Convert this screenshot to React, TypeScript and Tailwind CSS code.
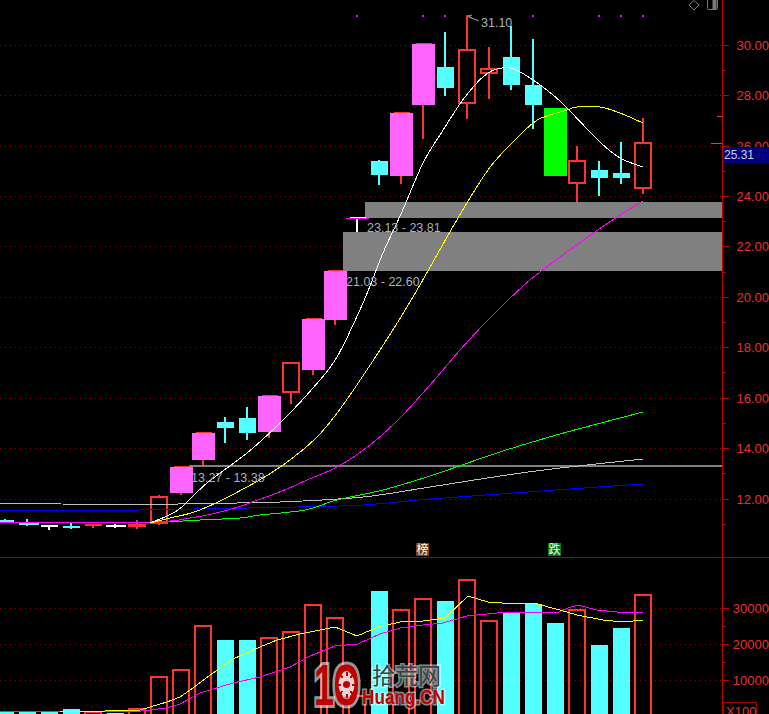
const RED = "#ff3232";
const CYAN = "#54ffff";
const PINK = "#ff64ff";
const GREEN = "#00ff00";

type Candle = { c: number; top: number; bot: number; hi: number; lo: number; kind: "pink" | "red" | "cyan" | "green" };

const candles: Candle[] = [
  { c: 159, top: 497, bot: 523, hi: 495, lo: 525, kind: "red" },
  { c: 181, top: 467, bot: 493, hi: 466, lo: 495, kind: "pink" },
  { c: 203, top: 433, bot: 460, hi: 432, lo: 465, kind: "pink" },
  { c: 225, top: 422, bot: 428, hi: 417, lo: 443, kind: "cyan" },
  { c: 247, top: 418, bot: 433, hi: 407, lo: 440, kind: "cyan" },
  { c: 269, top: 396, bot: 432, hi: 395, lo: 438, kind: "pink" },
  { c: 291, top: 363, bot: 392, hi: 362, lo: 404, kind: "red" },
  { c: 313, top: 319, bot: 370, hi: 318, lo: 375, kind: "pink" },
  { c: 335, top: 271, bot: 320, hi: 270, lo: 325, kind: "pink" },
  { c: 379, top: 161, bot: 175, hi: 160, lo: 185, kind: "cyan" },
  { c: 401, top: 113, bot: 176, hi: 112, lo: 184, kind: "pink" },
  { c: 423, top: 44, bot: 105, hi: 43, lo: 139, kind: "pink" },
  { c: 445, top: 67, bot: 88, hi: 32, lo: 96, kind: "cyan" },
  { c: 467, top: 50, bot: 103, hi: 16, lo: 119, kind: "red" },
  { c: 489, top: 69, bot: 73, hi: 47, lo: 99, kind: "red" },
  { c: 511, top: 57, bot: 85, hi: 26, lo: 90, kind: "cyan" },
  { c: 533, top: 85, bot: 105, hi: 39, lo: 129, kind: "cyan" },
  { c: 555, top: 108, bot: 176, hi: 108, lo: 176, kind: "green" },
  { c: 577, top: 161, bot: 183, hi: 146, lo: 202, kind: "red" },
  { c: 599, top: 170, bot: 178, hi: 161, lo: 196, kind: "cyan" },
  { c: 621, top: 173, bot: 178, hi: 142, lo: 184, kind: "cyan" },
  { c: 643, top: 143, bot: 188, hi: 118, lo: 194, kind: "red" },
];

const tiny = [
  { x: 0, w: 14, y: 520, h: 2, col: CYAN, wx: 4, w0: 519, w1: 522 },
  { x: 19, w: 20, y: 523, h: 2, col: CYAN, wx: 26, w0: 519, w1: 526 },
  { x: 41, w: 17, y: 525, h: 2, col: "#ffffff", wx: 48, w0: 525, w1: 530 },
  { x: 63, w: 17, y: 526, h: 2, col: CYAN, wx: 70, w0: 522, w1: 529 },
  { x: 85, w: 17, y: 524, h: 2, col: RED, wx: 92, w0: 524, w1: 528 },
  { x: 106, w: 20, y: 525, h: 2, col: "#ffffff", wx: 114, w0: 524, w1: 528 },
  { x: 128, w: 18, y: 524, h: 3, col: RED, wx: 136, w0: 520, w1: 529 },
];

const smooth = (a: number[][]) => {
  let d = `M${a[0][0]} ${a[0][1]}`;
  for (let i = 0; i < a.length - 1; i++) {
    const p0 = a[Math.max(i - 1, 0)];
    const p1 = a[i];
    const p2 = a[i + 1];
    const p3 = a[Math.min(i + 2, a.length - 1)];
    const c1x = p1[0] + (p2[0] - p0[0]) / 6;
    const c1y = p1[1] + (p2[1] - p0[1]) / 6;
    const c2x = p2[0] - (p3[0] - p1[0]) / 6;
    const c2y = p2[1] - (p3[1] - p1[1]) / 6;
    d += ` C${c1x.toFixed(1)} ${c1y.toFixed(1)} ${c2x.toFixed(1)} ${c2y.toFixed(1)} ${p2[0]} ${p2[1]}`;
  }
  return d;
};

const pts = (a: number[][]) => a.map((p) => p.join(",")).join(" ");

const lines: { col: string; d: number[][] }[] = [
  { col: "#c0c0c0", d: [[61, 504], [148, 504.5], [200, 503.5], [280, 502], [363, 497], [430, 487], [500, 476], [560, 468], [643, 459]] },
  { col: "#0000ff", d: [[0, 510], [140, 510], [193, 509], [297, 507], [363, 505], [430, 499], [500, 494], [570, 489], [643, 484]] },
  { col: GREEN, d: [[0, 522], [150, 522], [200, 520], [240, 518], [260, 515], [305, 510], [337, 500], [383, 490], [430, 476], [500, 452], [560, 434], [643, 412]] },
  { col: "#ff00ff", d: [[0, 523], [150, 522], [190, 518], [228, 510], [277, 493], [307, 480], [337, 467], [370, 445], [400, 418], [430, 385], [460, 350], [490, 318], [530, 280], [585, 239], [617, 217], [643, 201]] },
  { col: "#ffff00", d: [[150, 523], [170, 518], [200, 510], [247, 487], [283, 465], [317, 437], [343, 405], [380, 350], [413, 297], [458, 218], [488, 170], [510, 145], [533, 123], [544, 117], [567, 110], [577, 107], [600, 107], [620, 113], [643, 123]] },
  { col: "#ffffff", d: [[150, 523], [178, 510], [207, 483], [247, 453], [280, 423], [313, 388], [337, 357], [363, 303], [383, 253], [401, 214], [423, 163], [440, 135], [465, 97], [488, 73], [510, 68], [530, 78], [553, 95], [567, 108], [600, 142], [620, 158], [643, 167]] },
];

const vols: { c: number; top: number; red: boolean }[] = [
  { c: 5, top: 711, red: false }, { c: 27, top: 711, red: false }, { c: 49, top: 711, red: false },
  { c: 71, top: 709, red: false }, { c: 93, top: 712, red: true }, { c: 115, top: 713, red: false },
  { c: 137, top: 709, red: true }, { c: 159, top: 677, red: true }, { c: 181, top: 670, red: true },
  { c: 203, top: 626, red: true }, { c: 225, top: 640, red: false }, { c: 247, top: 640, red: false },
  { c: 269, top: 638, red: true }, { c: 291, top: 632, red: true }, { c: 313, top: 605, red: true },
  { c: 335, top: 618, red: true }, { c: 357, top: 696, red: true }, { c: 379, top: 591, red: false },
  { c: 401, top: 610, red: true }, { c: 423, top: 599, red: true }, { c: 445, top: 601, red: false },
  { c: 467, top: 580, red: true }, { c: 489, top: 621, red: true }, { c: 511, top: 613, red: false },
  { c: 533, top: 604, red: false }, { c: 555, top: 623, red: false }, { c: 577, top: 610, red: true },
  { c: 599, top: 645, red: false }, { c: 621, top: 628, red: false }, { c: 643, top: 595, red: true },
];

const volYellow = [[60, 711], [105, 711], [140, 710], [150, 707], [167, 702], [180, 697], [193, 688], [213, 673], [233, 659], [260, 647], [277, 640], [300, 634], [320, 630], [335, 627], [357, 636], [378, 627], [400, 622], [423, 621], [445, 618], [468, 596], [488, 602], [502, 603], [535, 603], [548, 607], [560, 610], [577, 615], [603, 620], [623, 622], [643, 620]];
const volMagenta = [[0, 711], [133, 712], [167, 708], [180, 704], [200, 693], [233, 683], [260, 677], [290, 667], [310, 656], [335, 646], [358, 644], [380, 634], [400, 628], [423, 625], [443, 623], [467, 616], [487, 614], [507, 612], [543, 612], [557, 613], [568, 608], [578, 605], [597, 610], [617, 612], [643, 612]];

const priceGrid = [45, 95, 146, 196, 246, 297, 347, 398, 448, 499];
const priceLabels = ["30.00", "28.00", "26.00", "24.00", "22.00", "20.00", "18.00", "16.00", "14.00", "12.00"];
const volGrid = [608, 644, 680];
const volLabels = ["30000", "20000", "10000"];
const topDots = [357, 423, 445, 467, 533, 599, 621, 643];

const FONT = "'Liberation Sans', Arial, sans-serif";
const CJK = "'Noto Sans CJK SC', sans-serif";

function Logo() {
  const teeth = [0, 45, 90, 135, 180, 225, 270, 315];
  const halo = { paintOrder: "stroke" as const };
  return (
    <svg className="absolute left-[310px] top-[655px] h-[59px] w-[145px]" viewBox="0 0 145 59">
      <g fontFamily={FONT} fontWeight="700" fontSize="58" fill="#c00000" stroke="rgba(255,255,255,0.6)" strokeWidth="6" style={halo}>
        <text x="4" y="50" textLength="20" lengthAdjust="spacingAndGlyphs">1</text>
        <text x="23" y="50" textLength="27" lengthAdjust="spacingAndGlyphs">0</text>
      </g>
      <ellipse cx="36.5" cy="29.5" rx="8" ry="12.5" fill="#ead4d4" />
      <g stroke="#c00000" strokeWidth="2" shapeRendering="crispEdges">
        {teeth.map((a) => {
          const r = (a * Math.PI) / 180;
          const cx = 36.5;
          const cy = 29.5;
          return (
            <line
              key={a}
              x1={cx + Math.cos(r) * 5.5}
              y1={cy + Math.sin(r) * 9}
              x2={cx + Math.cos(r) * 9}
              y2={cy + Math.sin(r) * 13}
            />
          );
        })}
      </g>
      <circle cx="36.5" cy="29.5" r="3.5" fill="#c00000" />
      <text x="62" y="29" fontSize="23" fontFamily={CJK} fill="#2f4444" stroke="rgba(255,255,255,0.55)" strokeWidth="3" style={halo}>
        拾荒网
      </text>
      <text
        x="52" y="49" fontSize="20" fontWeight="700" fontFamily={FONT} textLength="83" lengthAdjust="spacingAndGlyphs"
        fill="#c00000" stroke="rgba(255,255,255,0.55)" strokeWidth="3" style={halo}
      >
        Huang.CN
      </text>
    </svg>
  );
}

function PricePlot() {
  return (
    <svg className="block h-[557px] w-[722px] shrink-0" viewBox="0 0 722 557">
      <g shapeRendering="crispEdges">
        {priceGrid.map((y) => (
          <line key={y} x1="0" x2="722" y1={y + 0.5} y2={y + 0.5} stroke="#a00000" strokeDasharray="1 4" />
        ))}
        {topDots.map((x) => (
          <rect key={x} x={x - 1} y="15" width="2" height="2" fill="#ff00ff" />
        ))}
        <rect x="365" y="202" width="357" height="16" fill="#808080" />
        <rect x="343" y="232" width="379" height="39" fill="#808080" />
        <rect x="189" y="465" width="533" height="2" fill="#808080" />
        <rect x="711" y="143" width="11" height="1" fill="#808000" />
        <rect x="717" y="116" width="5" height="1" fill={RED} />
      </g>

      <g shapeRendering="crispEdges">
        {tiny.map((t) => (
          <g key={t.x}>
            <rect x={t.wx} y={t.w0} width="2" height={t.w1 - t.w0} fill={t.col} />
            <rect x={t.x} y={t.y} width={t.w} height={t.h} fill={t.col} />
          </g>
        ))}
        <rect x="356" y="217" width="2" height="15" fill="#ffffff" />
        <rect x="346" y="218" width="23" height="1" fill="#ff00ff" />
        <rect x="350" y="217" width="16" height="1" fill="#ffffff" />
        {candles.map((k) => {
          const x = k.c - 8;
          if (k.kind === "red") {
            return (
              <g key={k.c}>
                <rect x={k.c - 1} y={k.hi} width="2" height={k.top - k.hi} fill={RED} />
                <rect x={k.c - 1} y={k.bot} width="2" height={k.lo - k.bot} fill={RED} />
                <rect x={x} y={k.top} width="16" height={k.bot - k.top} fill="none" stroke={RED} strokeWidth="2" />
              </g>
            );
          }
          if (k.kind === "cyan") {
            return (
              <g key={k.c}>
                <rect x={k.c - 1} y={k.hi} width="2" height={k.lo - k.hi} fill={CYAN} />
                <rect x={x} y={k.top} width="17" height={k.bot - k.top} fill={CYAN} />
              </g>
            );
          }
          if (k.kind === "green") {
            return <rect key={k.c} x={k.c - 11} y={k.top} width="23" height={k.bot - k.top} fill={GREEN} />;
          }
          return (
            <g key={k.c}>
              <rect x={k.c - 1} y={k.bot} width="2" height={k.lo - k.bot} fill={RED} />
              <rect x={k.c - 7} y={k.hi} width="16" height="1" fill={RED} />
              <rect x={k.c - 11} y={k.top} width="23" height={k.bot - k.top} fill={PINK} />
            </g>
          );
        })}
      </g>

      <g fill="none" strokeWidth="1" shapeRendering="crispEdges">
        <polyline points={pts([[0, 503], [61, 503]])} stroke="#c0c0c0" />
        {lines.map((l) => (
          <path key={l.col} d={smooth(l.d)} stroke={l.col} />
        ))}
      </g>

      <path d="M479 21 L469 17 M472 15 L468 16 L472 18" fill="none" stroke="#a0a0a0" strokeWidth="1" />
      <g fontFamily={FONT} fontSize="12.5" fill="#aab2ba">
        <text x="481" y="27">31.10</text>
        <text x="367" y="232">23.13 - 23.81</text>
        <text x="346" y="286">21.03 - 22.60</text>
        <text x="191" y="482">13.27 - 13.38</text>
      </g>

      <g fill="none" stroke="#7a7a7a" shapeRendering="geometricPrecision">
        <path d="M694 0.5 L699 5 L694 10 L689 5 Z" />
        <path d="M707.5 -1 V8.5 Q707.5 9.5 708.5 9.5 H716.5 Q717.5 9.5 717.5 8.5 V-1" />
        <rect x="712.5" y="0" width="4" height="9" fill="#7a7a7a" stroke="none" />
      </g>

      <rect x="416" y="543" width="13" height="13" fill="#7a3e0a" shapeRendering="crispEdges" />
      <text x="422.5" y="554" textAnchor="middle" fontSize="12" fontFamily={CJK} fill="#ffffff">榜</text>
      <rect x="548" y="543" width="13" height="13" fill="#007a10" shapeRendering="crispEdges" />
      <text x="554.5" y="554" textAnchor="middle" fontSize="12" fontFamily={CJK} fill="#ffffff">跌</text>
    </svg>
  );
}

function VolumePlot() {
  return (
    <svg className="block h-[156px] w-[722px] shrink-0" viewBox="0 558 722 156">
      <g shapeRendering="crispEdges">
        {volGrid.map((y) => (
          <line key={y} x1="0" x2="722" y1={y + 0.5} y2={y + 0.5} stroke="#a00000" strokeDasharray="1 4" />
        ))}
        {vols.map((v) =>
          v.red ? (
            <rect key={v.c} x={v.c - 8} y={v.top} width="16" height={730 - v.top} fill="none" stroke={RED} strokeWidth="2" />
          ) : (
            <rect key={v.c} x={v.c - 8} y={v.top} width="17" height={714 - v.top} fill={CYAN} />
          ),
        )}
      </g>
      <g fill="none" strokeWidth="1" shapeRendering="crispEdges">
        <polyline points={pts(volMagenta)} stroke="#ff00ff" />
        <polyline points={pts(volYellow)} stroke="#ffff00" />
      </g>
    </svg>
  );
}

function Axis({ ticks, labels, minor, height, offset }: { ticks: number[]; labels: string[]; minor: number[]; height: number; offset: number }) {
  return (
    <svg className="block w-[46px] shrink-0" style={{ height }} viewBox={`723 ${offset} 46 ${height}`}>
      <g shapeRendering="crispEdges">
        {ticks.map((y) => (
          <line key={y} x1="723" x2="729" y1={y + 0.5} y2={y + 0.5} stroke="#c00000" />
        ))}
        {minor.map((y) => (
          <line key={y} x1="723" x2="726" y1={y + 0.5} y2={y + 0.5} stroke="#c00000" />
        ))}
      </g>
      <g fontFamily={FONT} fontSize="13" fill="#e83030" textAnchor="end">
        {labels.map((t, i) => (
          <text key={t} x="769" y={ticks[i] + 5}>{t}</text>
        ))}
      </g>
    </svg>
  );
}

export default function App() {
  return (
    <div className="relative h-[714px] w-[769px] overflow-hidden bg-black" style={{ fontFamily: FONT }}>
      <div className="flex h-[557px]">
        <PricePlot />
        <div className="relative flex-1 border-l border-[#c00000]">
          <Axis ticks={priceGrid} labels={priceLabels} minor={[70, 171, 221, 272, 322, 372, 423, 473, 524]} height={557} offset={0} />
          <div className="absolute left-0 top-[147px] h-4 w-[46px] bg-[#00007f] pl-px text-xs leading-4 text-[#c8d0e0]">25.31</div>
        </div>
      </div>
      <div className="h-px w-full bg-[#a00000]" />
      <div className="flex">
        <VolumePlot />
        <div className="relative flex-1 border-l border-[#c00000]">
          <Axis ticks={volGrid} labels={volLabels} minor={[626, 662]} height={156} offset={558} />
          <div className="absolute left-0 top-[144px] h-5 w-[34px] border border-[#a00000] pl-0.5 text-[13px] leading-[18px] text-[#e83030]">X100</div>
        </div>
      </div>
      <Logo />
    </div>
  );
}
